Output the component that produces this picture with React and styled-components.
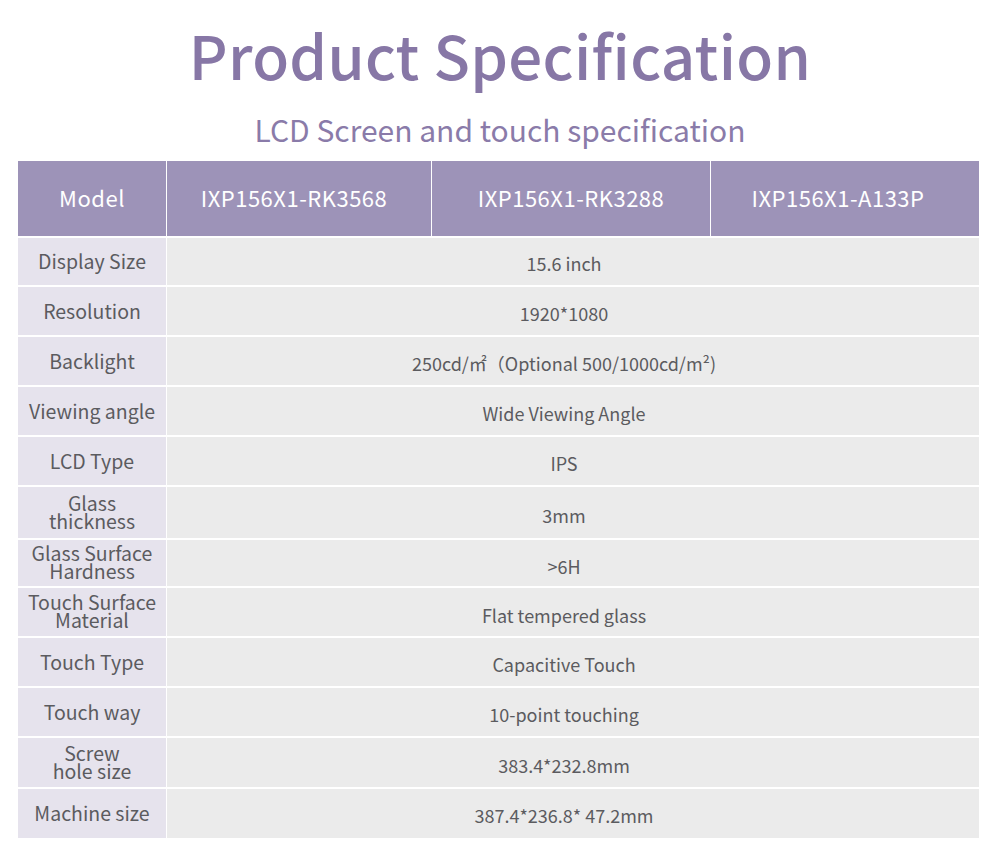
import React from "react";
import styled, { createGlobalStyle } from "styled-components";

const Global = createGlobalStyle`
  html, body { margin: 0; padding: 0; background: #ffffff; }
  body { font-family: "Noto Sans CJK SC", "Noto Sans", sans-serif; }
`;

const Page = styled.div`
  width: 1000px;
  height: 860px;
  display: flex;
  flex-direction: column;
  align-items: center;
  box-sizing: border-box;
  padding-top: 14px;
`;

const Title = styled.h1`
  margin: 0;
  font-family: "Noto Sans CJK SC", "Noto Sans", sans-serif;
  font-weight: 500;
  font-size: 60px;
  line-height: 80px;
  color: #8777a6;
  letter-spacing: 0.3px;
`;

const Subtitle = styled.h2`
  margin: 15px 0 0;
  font-weight: 400;
  font-size: 30px;
  line-height: 40px;
  color: #8a7ba9;
`;

const Table = styled.div`
  align-self: flex-start;
  margin: 12px 0 0 18px;
  width: 961px;
  display: grid;
  grid-template-columns: 148px 264px 278px 268px;
  column-gap: 1px;
  row-gap: 2px;
`;

const HeadCell = styled.div`
  height: 75px;
  background: #9d93b8;
  color: #ffffff;
  font-size: 22px;
  letter-spacing: 0.5px;
  display: flex;
  align-items: center;
  justify-content: center;
  padding-bottom: 3px;
  padding-right: ${(p) => p.$shift || 0}px;
  box-sizing: border-box;
`;

const Label = styled.div`
  height: ${(p) => p.$h}px;
  background: #e6e3ed;
  color: #5b5b5f;
  font-size: 19.5px;
  line-height: 18px;
  text-align: center;
  display: flex;
  align-items: center;
  justify-content: center;
  padding-bottom: ${(p) => (p.$multi ? "2px" : "1px")};
  box-sizing: border-box;
`;

const Value = styled.div`
  grid-column: 2 / -1;
  height: ${(p) => p.$h}px;
  background: #ebebeb;
  color: #5b5b5f;
  font-size: 18px;
  display: flex;
  align-items: center;
  justify-content: center;
  padding-top: ${(p) => (p.$multi ? "5px" : "3px")};
  padding-right: 18px;
  box-sizing: border-box;
`;

const rows = [
  ["Display Size", "15.6 inch", 47],
  ["Resolution", "1920*1080", 48],
  ["Backlight", "250cd/㎡（Optional 500/1000cd/m²)", 48],
  ["Viewing angle", "Wide Viewing Angle", 48],
  ["LCD Type", "IPS", 48],
  [["Glass", "thickness"], "3mm", 51],
  [["Glass Surface", "Hardness"], ">6H", 46],
  [["Touch Surface", "Material"], "Flat tempered glass", 48],
  ["Touch Type", "Capacitive Touch", 48],
  ["Touch way", "10-point touching", 48],
  [["Screw", "hole size"], "383.4*232.8mm", 49],
  ["Machine size", "387.4*236.8* 47.2mm", 49],
];

export default function App() {
  return (
    <>
      <Global />
      <Page>
        <Title>Product Specification</Title>
        <Subtitle>LCD Screen and touch specification</Subtitle>
        <Table>
          <HeadCell>Model</HeadCell>
          <HeadCell $shift={10}>IXP156X1-RK3568</HeadCell>
          <HeadCell>IXP156X1-RK3288</HeadCell>
          <HeadCell $shift={14}>IXP156X1-A133P</HeadCell>
          {rows.map(([label, value, h], i) => {
            const multi = Array.isArray(label);
            return (
              <React.Fragment key={i}>
                <Label $multi={multi} $h={h}>
                  {multi ? (
                    <span>
                      {label[0]}
                      <br />
                      {label[1]}
                    </span>
                  ) : (
                    label
                  )}
                </Label>
                <Value $multi={multi} $h={h}>
                  {value}
                </Value>
              </React.Fragment>
            );
          })}
        </Table>
      </Page>
    </>
  );
}
